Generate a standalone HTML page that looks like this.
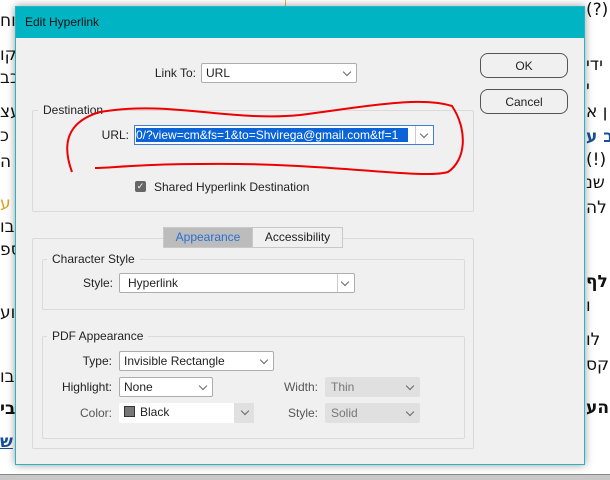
<html><head><style>
body{margin:0;width:610px;height:479px;overflow:hidden;background:#fff;position:relative;font-family:"Liberation Sans","DejaVu Sans",sans-serif;font-size:12px;color:#222}
.a{position:absolute}
.heb{position:absolute;font-family:"DejaVu Sans",sans-serif;font-size:17px;color:#111;white-space:nowrap;direction:rtl}
.dlg{position:absolute;left:15px;top:6px;width:568px;height:457px;background:#f0f0f0;border:1px solid #27b4c3;box-shadow:0 0 8px rgba(0,0,0,.4)}
.title{position:absolute;left:0;top:0;width:568px;height:31px;background:#00b4c4;color:#111;font-size:12px;line-height:31px;text-indent:9px}
.grp{position:absolute;border:1px solid #dadada;border-radius:2px}
.lg{position:absolute;top:-8px;background:#f0f0f0;padding:0 5px;font-size:12px}
.sel{position:absolute;background:#fff;border:1px solid #adadad;border-radius:2px;height:20px;line-height:18px;padding-left:4px;box-sizing:border-box;font-size:12px}
.sel.d{background:#e0e0e0;border-color:#e0e0e0;color:#777}
.chev{position:absolute;right:6px;top:5px;width:5px;height:5px;border-right:1px solid #666;border-bottom:1px solid #666;transform:rotate(45deg)}
.lbl{position:absolute;font-size:12px;text-align:right;line-height:20px}
.btn{position:absolute;width:88px;height:25px;border:1px solid #555;border-radius:8px;text-align:center;line-height:25px;font-size:12px;background:#f0f0f0;box-sizing:border-box}
</style></head><body>
<div class="a" style="left:285px;top:0;width:1px;height:6px;background:#e0b060"></div>
<div class="heb" style="left:0;top:11px">וח</div>
<div class="heb" style="left:0;top:45px">קו</div>
<div class="heb" style="left:0;top:68px">כב</div>
<div class="heb" style="left:0;top:102px">עצ</div>
<div class="heb" style="left:0;top:126px">כ</div>
<div class="heb" style="left:0;top:152px">ה</div>
<div class="heb" style="left:0;top:194px;color:#e0a020">ע</div>
<div class="heb" style="left:0;top:217px">בו</div>
<div class="heb" style="left:0;top:240px">ספ</div>
<div class="heb" style="left:0;top:303px">וע</div>
<div class="heb" style="left:0;top:367px">בו</div>
<div class="heb" style="left:0;top:399px;font-weight:bold">בי</div>
<div class="heb" style="left:0;top:432px;color:#1a4f9a;text-decoration:underline;font-weight:bold">ש</div>
<div class="heb" style="left:586px;top:0">(?)</div>
<div class="heb" style="left:586px;top:55px">ידי</div>
<div class="heb" style="left:586px;top:78px">י</div>
<div class="heb" style="left:586px;top:102px">ן א</div>
<div class="heb" style="left:586px;top:127px;color:#1a4f9a;font-weight:bold">ב ע</div>
<div class="heb" style="left:586px;top:150px">(!)</div>
<div class="heb" style="left:586px;top:173px">שנ</div>
<div class="heb" style="left:586px;top:198px">לה</div>
<div class="heb" style="left:586px;top:272px;font-weight:bold">לף</div>
<div class="heb" style="left:586px;top:296px">ו</div>
<div class="heb" style="left:586px;top:330px">לו</div>
<div class="heb" style="left:586px;top:355px">קס</div>
<div class="heb" style="left:586px;top:398px;font-weight:bold">הע</div>
<div class="a" style="left:0;top:474px;width:610px;height:5px;background:#c8c8c8;border-top:1px solid #888"></div>

<div class="dlg">
<div class="title">Edit Hyperlink</div>
<div class="lbl" style="left:120px;top:56px;width:60px">Link To:</div>
<div class="sel" style="left:185px;top:56px;width:156px">URL<div class="chev"></div></div>
<div class="btn" style="left:464px;top:46px">OK</div>
<div class="btn" style="left:464px;top:82px">Cancel</div>

<div class="grp" style="left:16px;top:103px;width:440px;height:100px"><div class="lg" style="left:5px">Destination</div></div>
<div class="lbl" style="left:60px;top:118px;width:53px">URL:</div>
<div class="a" style="left:118px;top:118px;width:300px;height:20px;background:#fff;border:1px solid #3c7fd5;box-sizing:border-box">
<div class="a" style="left:1px;top:2px;height:14px;width:272px;background:#0a64d8;color:#fff;font-size:12px;line-height:14px;white-space:nowrap;overflow:hidden">0/?view=cm&amp;fs=1&amp;to=Shvirega@gmail.com&amp;tf=1</div>
<div class="a" style="left:280px;top:0;width:1px;height:18px;background:#ccc"></div><div class="chev" style="right:6px"></div></div>
<div class="a" style="left:119px;top:174px;width:11px;height:11px;background:#666;border-radius:2px;color:#fff;font-size:9px;line-height:11px;text-align:center">✓</div>
<div class="a" style="left:138px;top:173px">Shared Hyperlink Destination</div>

<div class="grp" style="left:16px;top:231px;width:440px;height:209px"></div>
<div class="a" style="left:147px;top:220px;width:88px;height:19px;background:#bcbcbc;border:1px solid #c8c8c8;color:#2a6fd0;text-align:center;line-height:19px">Appearance</div>
<div class="a" style="left:236px;top:220px;width:89px;height:19px;background:#f0f0f0;border:1px solid #c8c8c8;text-align:center;line-height:19px">Accessibility</div>

<div class="grp" style="left:26px;top:252px;width:421px;height:49px"><div class="lg" style="left:4px">Character Style</div></div>
<div class="lbl" style="left:50px;top:266px;width:47px">Style:</div>
<div class="sel" style="left:103px;top:266px;width:236px;padding-left:8px">Hyperlink<div class="a" style="left:217px;top:0;width:1px;height:18px;background:#ccc"></div><div class="chev"></div></div>

<div class="grp" style="left:26px;top:329px;width:421px;height:101px"><div class="lg" style="left:4px">PDF Appearance</div></div>
<div class="lbl" style="left:30px;top:344px;width:66px">Type:</div>
<div class="sel" style="left:103px;top:344px;width:155px">Invisible Rectangle<div class="chev"></div></div>
<div class="lbl" style="left:30px;top:370px;width:66px">Highlight:</div>
<div class="sel" style="left:103px;top:370px;width:94px">None<div class="chev"></div></div>
<div class="lbl" style="left:30px;top:396px;width:66px;color:#555">Color:</div>
<div class="sel" style="left:103px;top:396px;width:135px;border:none;padding-left:5px"><span style="display:inline-block;width:9px;height:9px;background:#777;border:1px solid #333;vertical-align:-1px;margin-right:5px"></span>Black<div class="a" style="left:115px;top:0;width:20px;height:20px;background:#e0e0e0"></div><div class="chev"></div></div>
<div class="lbl" style="left:250px;top:370px;width:52px;color:#555">Width:</div>
<div class="sel d" style="left:309px;top:370px;width:95px;padding-left:5px">Thin<div class="chev"></div></div>
<div class="lbl" style="left:250px;top:396px;width:52px;color:#555">Style:</div>
<div class="sel d" style="left:309px;top:396px;width:95px;padding-left:5px">Solid<div class="chev"></div></div>
</div>

<svg class="a" style="left:0;top:0" width="610" height="479"><path d="M72 172 C62 145 66 122 100 112 C170 100 230 122 300 115 C370 106 420 96 452 106 C468 130 466 160 448 172 C420 180 330 162 200 164 C140 164 110 168 95 168" fill="none" stroke="#e00" stroke-width="2"/></svg>
</body></html>
